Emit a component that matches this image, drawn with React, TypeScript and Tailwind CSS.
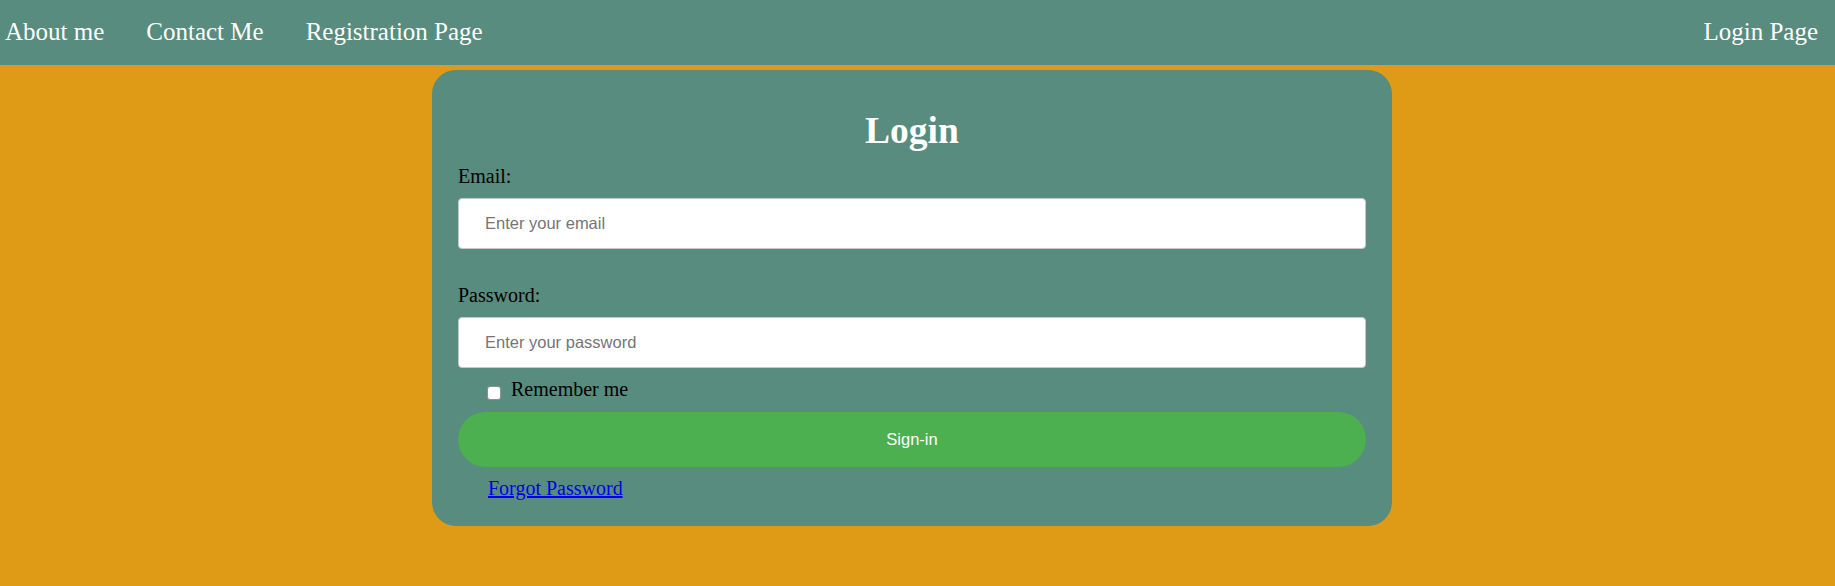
import React from "react";

const App = () => {
  return (
    <div className="min-h-screen bg-[#df9b15] font-['Liberation_Serif',serif]">
      <nav className="h-[65px] pb-[2px] bg-[#588c7e] flex items-center justify-between text-white text-[25px] leading-[28px]">
        <div className="flex items-center gap-[42px] pl-[5px]">
          <a href="#">About me</a>
          <a href="#">Contact Me</a>
          <a href="#">Registration Page</a>
        </div>
        <a href="#" className="pr-[17px]">
          Login Page
        </a>
      </nav>

      <div className="mt-[5px] ml-[432px] w-[960px] bg-[#588c7e] rounded-[24px] pt-[40px] px-[26px] pb-[26px]">
        <h1 className="text-center text-white font-bold text-[37.5px] leading-[42px]">
          Login
        </h1>

        <form className="flex flex-col text-[20px] leading-[23px] text-black">
          <label className="mt-[13px]">Email:</label>
          <input
            type="email"
            placeholder="Enter your email"
            className="mt-[10px] h-[51px] w-full bg-white border border-[#c8c8c8] rounded-[4px] pl-[26px] font-['Liberation_Sans',sans-serif] text-[16.5px] placeholder:text-[#757575] outline-none"
          />

          <label className="mt-[35px]">Password:</label>
          <input
            type="password"
            placeholder="Enter your password"
            className="mt-[10px] h-[51px] w-full bg-white border border-[#c8c8c8] rounded-[4px] pl-[26px] font-['Liberation_Sans',sans-serif] text-[16.5px] placeholder:text-[#757575] outline-none"
          />

          <div className="mt-[10px] h-[23px] flex items-start pl-[29px]">
            <input
              type="checkbox"
              className="appearance-none m-0 mt-[8px] w-[14px] h-[14px] bg-white border border-[#8f8f8f] rounded-[3px]"
            />
            <span className="ml-[10px]">Remember me</span>
          </div>

          <button
            type="button"
            className="mt-[11px] h-[55px] w-full rounded-full bg-[#4caf50] text-white font-['Liberation_Sans',sans-serif] text-[16.5px]"
          >
            Sign-in
          </button>

          <div className="mt-[10px] pl-[30px]">
            <a href="#" className="text-[#0000ee] underline">
              Forgot Password
            </a>
          </div>
        </form>
      </div>
    </div>
  );
};

export default App;
